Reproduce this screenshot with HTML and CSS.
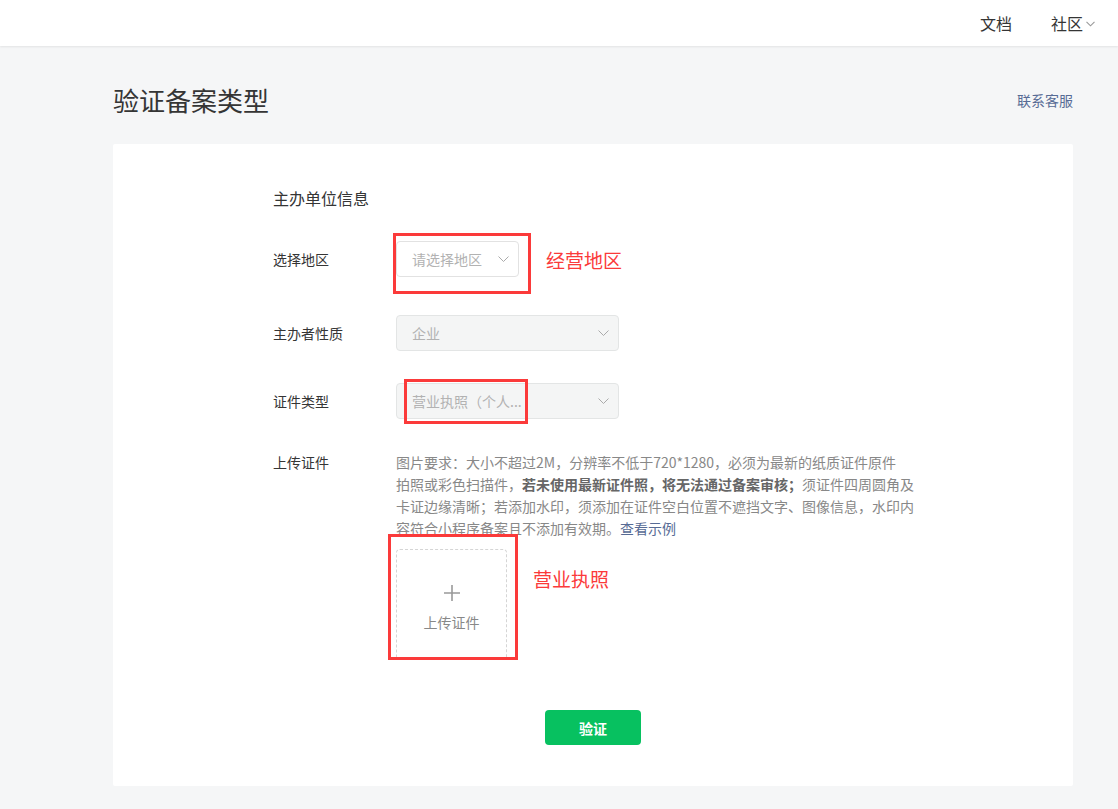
FILE: index.html
```html
<!DOCTYPE html>
<html>
<head>
  <meta charset="utf-8">
  <link rel="stylesheet" href="styles.css">
</head>
<body>
  <div class="topbar">
    <a class="topbar-link" href="#">文档</a>
    <a class="topbar-link" href="#">社区<svg class="topbar-arrow" width="9" height="6" viewBox="0 0 9 6"><path d="M0.5 0.8 L4.5 4.8 L8.5 0.8" fill="none" stroke="#999" stroke-width="1.1"/></svg></a>
  </div>

  <div class="main">
    <div class="page-head">
      <h2 class="page-title">验证备案类型</h2>
      <a class="service" href="#">联系客服</a>
    </div>

    <div class="card">
      <div class="form">
        <h3 class="form-title">主办单位信息</h3>

        <div class="form-row row-area">
          <label class="form-label">选择地区</label>
          <div class="select select-sm">
            <span class="select-text">请选择地区</span>
            <svg class="select-arrow" width="11" height="6" viewBox="0 0 11 6"><path d="M0.5 0.5 L5.5 5.5 L10.5 0.5" fill="none" stroke="#aaa" stroke-width="1"/></svg>
            <div class="mark mark-area"></div>
          </div>
          <span class="note note-area">经营地区</span>
        </div>

        <div class="form-row row-type">
          <label class="form-label">主办者性质</label>
          <div class="select disabled">
            <span class="select-text">企业</span>
            <svg class="select-arrow" width="11" height="6" viewBox="0 0 11 6"><path d="M0.5 0.5 L5.5 5.5 L10.5 0.5" fill="none" stroke="#aaa" stroke-width="1"/></svg>
          </div>
        </div>

        <div class="form-row row-cert">
          <label class="form-label">证件类型</label>
          <div class="select disabled">
            <span class="select-text">营业执照（个人...</span>
            <svg class="select-arrow" width="11" height="6" viewBox="0 0 11 6"><path d="M0.5 0.5 L5.5 5.5 L10.5 0.5" fill="none" stroke="#aaa" stroke-width="1"/></svg>
            <div class="mark mark-cert"></div>
          </div>
        </div>

        <div class="form-row row-upload">
          <label class="form-label">上传证件</label>
          <div class="upload-field">
            <p class="upload-tips">图片要求：大小不超过2M，分辨率不低于720*1280，必须为最新的纸质证件原件<br>拍照或彩色扫描件，<b>若未使用最新证件照，将无法通过备案审核；</b>须证件四周圆角及<br>卡证边缘清晰；若添加水印，须添加在证件空白位置不遮挡文字、图像信息，水印内<br>容符合小程序备案且不添加有效期。<a href="#">查看示例</a></p>
            <div class="upload-line">
              <div class="upload-box">
                <svg width="18" height="18" viewBox="0 0 18 18"><path d="M9 1 V17 M1 9 H17" stroke="#999" stroke-width="1.6"/></svg>
                <span class="upload-text">上传证件</span>
                <div class="mark mark-upload"></div>
              </div>
              <span class="note note-upload">营业执照</span>
            </div>
          </div>
        </div>
      </div>

      <div class="form-footer">
        <button class="btn-primary">验证</button>
      </div>
    </div>
  </div>
</body>
</html>
```

FILE: styles.css
```css
body {
  margin: 0;
  background: #f5f6f7;
  font-family: "Noto Sans CJK SC", sans-serif;
  color: #353535;
}

a {
  text-decoration: none;
}

.topbar {
  height: 46px;
  background: #fff;
  box-shadow: 0 1px 2px rgba(0, 0, 0, 0.08);
  display: flex;
  justify-content: flex-end;
  padding-right: 23px;
}

.topbar-link {
  color: #353535;
  font-size: 16px;
  line-height: 36px;
  margin-left: 39px;
  display: flex;
  align-items: center;
}

.topbar-arrow {
  margin-left: 3px;
  margin-top: 2px;
}

.main {
  width: 960px;
  margin-left: 113px;
}

.page-head {
  display: flex;
  justify-content: space-between;
  align-items: center;
  padding-top: 36px;
  margin-bottom: 26px;
}

.page-title {
  margin: 0;
  font-size: 26px;
  font-weight: normal;
  line-height: 36px;
  color: #353535;
}

.service {
  font-size: 14px;
  color: #576b95;
}

.card {
  background: #fff;
  border-radius: 2px;
  padding: 42px 0 41px;
}

.form {
  padding-left: 160px;
}

.form-title {
  margin: 0 0 31px;
  font-size: 16px;
  font-weight: normal;
  line-height: 24px;
}

.form-row {
  display: flex;
  align-items: center;
}

.row-area { margin-bottom: 38px; }
.row-type { margin-bottom: 32px; }
.row-cert { margin-bottom: 32px; }

.row-upload {
  align-items: flex-start;
}

.form-label {
  width: 123px;
  font-size: 14px;
  line-height: 22px;
  color: #353535;
}

.select {
  position: relative;
  box-sizing: border-box;
  width: 223px;
  height: 36px;
  border: 1px solid #e2e2e2;
  border-radius: 4px;
  background: #fff;
  display: flex;
  align-items: center;
  justify-content: space-between;
  padding: 0 9px 0 15px;
}

.select-sm {
  width: 123px;
}

.select.disabled {
  background: #f4f5f5;
  border-color: #e3e5e5;
}

.select-text {
  font-size: 14px;
  color: #b2b2b2;
}

.mark {
  position: absolute;
  border: 3px solid #fb3a3a;
  box-sizing: border-box;
}

.mark-area {
  left: -4px;
  top: -9px;
  width: 138px;
  height: 61px;
}

.mark-cert {
  left: 7px;
  top: -5px;
  width: 124px;
  height: 45px;
}

.mark-upload {
  left: -9px;
  top: -16px;
  width: 130px;
  height: 126px;
}

.note {
  color: #fb3a3a;
  font-size: 19px;
}

.note-area {
  margin-left: 27px;
}

.upload-field {
  width: 540px;
}

.upload-tips {
  margin: 0;
  font-size: 14px;
  line-height: 22px;
  color: #888;
  white-space: nowrap;
  text-spacing-trim: space-all;
}

.upload-tips b {
  color: #666;
}

.upload-tips a {
  color: #576b95;
}

.upload-line {
  display: flex;
  align-items: flex-start;
  margin-top: 10px;
}

.upload-box {
  position: relative;
  box-sizing: border-box;
  width: 111px;
  height: 111px;
  border: 1px dashed #d5d5d5;
  border-radius: 4px;
  display: flex;
  flex-direction: column;
  align-items: center;
  padding-top: 34px;
}

.upload-text {
  margin-top: 10px;
  font-size: 14px;
  line-height: 20px;
  color: #888;
}

.note-upload {
  margin-left: 26px;
  margin-top: 16px;
}

.form-footer {
  display: flex;
  justify-content: center;
  margin-top: 50px;
}

.btn-primary {
  width: 96px;
  height: 35px;
  border: 0;
  border-radius: 4px;
  background: #07c160;
  color: #fff;
  font-family: "Noto Sans CJK SC", sans-serif;
  font-size: 14px;
  font-weight: bold;
}
```
